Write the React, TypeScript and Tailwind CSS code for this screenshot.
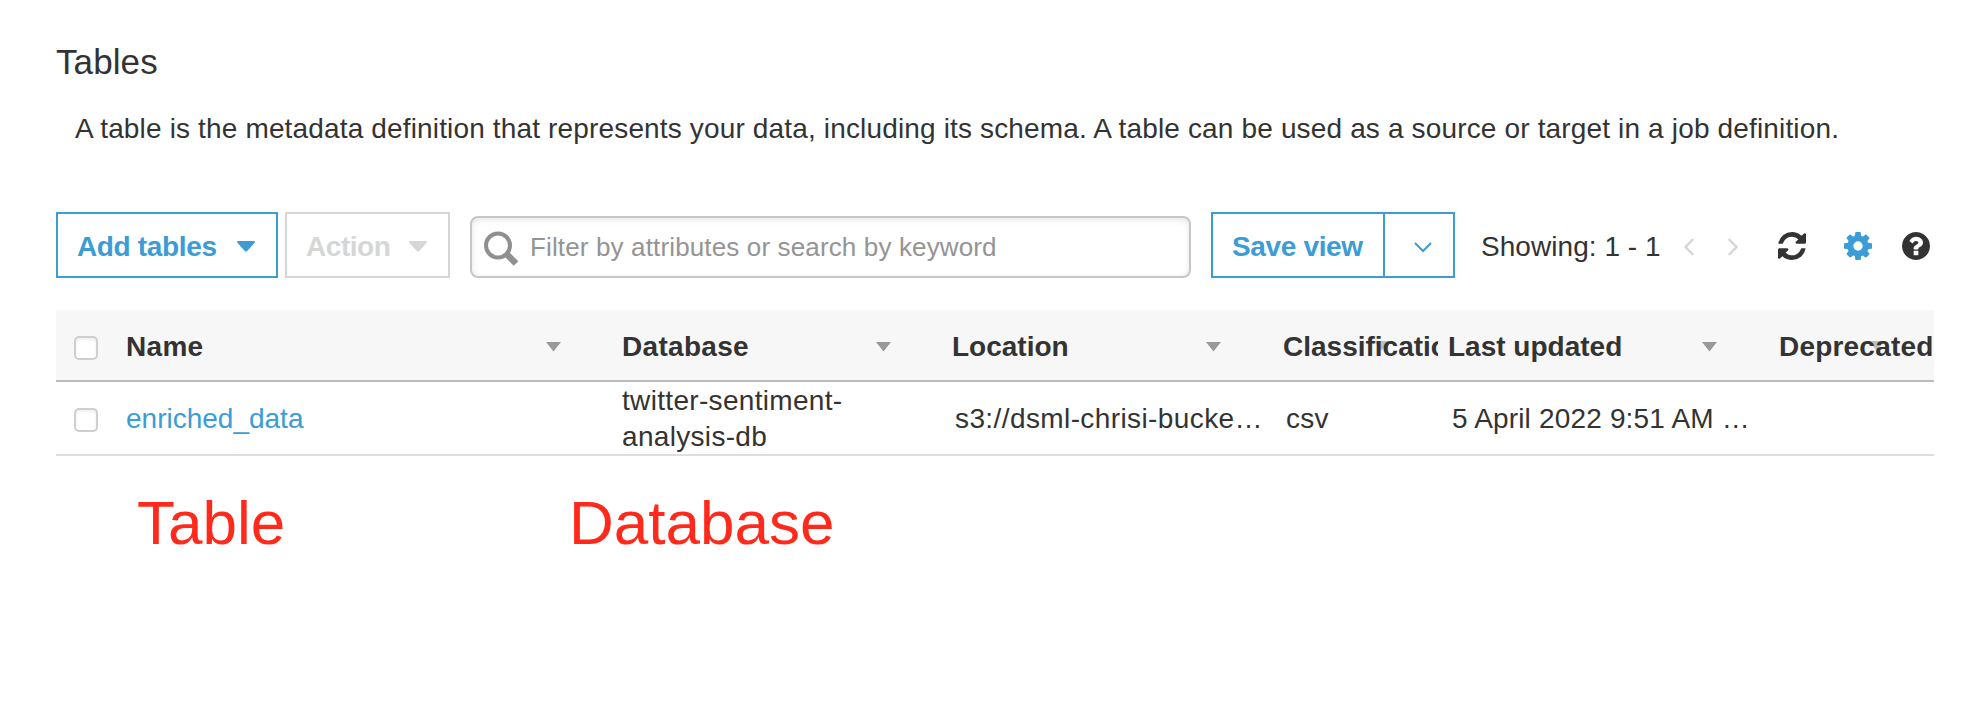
import type { ReactNode } from "react";

function Caret() {
  return (
    <svg viewBox="0 0 18 11" className="mt-[3px] h-[11px] w-[18px]" fill="currentColor">
      <path d="M1 0h16q1.500.4.6 1.700L10.200 10q-1.200 1.200-2.400 0L.4 1.700Q-.5.4 1 0z" />
    </svg>
  );
}

function SortArrow({ className = "" }: { className?: string }) {
  return (
    <svg viewBox="0 0 15 10" className={"h-[10px] w-[15px] text-[#999999] " + className} fill="currentColor">
      <path d="M0 0h15L7.500 9.500z" />
    </svg>
  );
}

function Checkbox() {
  return (
    <span className="block h-6 w-6 rounded-[5px] border-2 border-[#cfcfcf] bg-white shadow-[inset_0_2px_3px_rgba(0,0,0,0.07)]" />
  );
}

function HeaderCell({ children, className }: { children: ReactNode; className: string }) {
  return <div className={"flex items-center pt-[3px] whitespace-nowrap " + className}>{children}</div>;
}

export default function App() {
  return (
    <div className="h-[716px] w-[1986px] overflow-hidden bg-white pl-14 font-['Liberation_Sans',Arial,sans-serif] text-[28px] leading-9 text-[#333333]">
      <h1 className="pt-[41px] text-[35px] leading-[42px] tracking-[0.1px]">Tables</h1>
      <p className="mt-7 pl-[19px] leading-9 tracking-[0.153px] whitespace-nowrap">
        A table is the metadata definition that represents your data, including its schema. A table can be used as a
        source or target in a job definition.
      </p>

      <div className="mt-[65px] flex h-[66px] items-center whitespace-nowrap">
        <button className="flex h-[66px] w-[222px] items-center justify-between border-2 border-[#3b9cd6] pr-[21px] pl-[19px] font-bold tracking-[-0.35px] text-[#3b9cd6]">
          <span className="pt-[3px]">Add tables</span>
          <Caret />
        </button>
        <button className="ml-[7px] flex h-[66px] w-[165px] items-center justify-between border-2 border-[#d5d7d7] pr-[21px] pl-[19px] font-bold tracking-[-0.45px] text-[#d5d7d7]">
          <span className="pt-[3px]">Action</span>
          <Caret />
        </button>
        <div className="ml-5 flex h-[62px] w-[721px] items-center self-end rounded-lg border-2 border-[#c6c6c6] pl-3 text-[26px] tracking-[0.14px] text-[#949494] shadow-[inset_0_2px_6px_rgba(0,0,0,0.1)]">
          <svg viewBox="0 0 36 36" className="mt-[3px] h-9 w-9" fill="none" stroke="#8f8f8f">
            <circle cx="14" cy="14.500" r="12" strokeWidth="4" />
            <path d="M23 23.500l9 9" strokeWidth="6.500" />
          </svg>
          <span className="ml-[10px]">Filter by attributes or search by keyword</span>
        </div>
        <div className="ml-5 flex h-[66px] w-[244px] border-2 border-[#3b9cd6] text-[#3b9cd6]">
          <button className="w-[172px] border-r-2 border-[#3b9cd6] pt-[3px] pl-[19px] text-left font-bold tracking-[-0.35px]">
            Save view
          </button>
          <button className="flex flex-1 items-center justify-center pl-[7px]">
            <svg viewBox="0 0 18 11" className="mt-1 h-[11px] w-[18px]" fill="none" stroke="currentColor" strokeWidth="2">
              <path d="M1 1l8 8 8-8" />
            </svg>
          </button>
        </div>
        <span className="ml-[26px] w-[178px] pt-[3px] tracking-[0.05px]">Showing: 1 - 1</span>
        <svg viewBox="0 0 10 18" className="mt-[3px] ml-[25px] h-[18px] w-[10px]" fill="none" stroke="#d5d7d7" strokeWidth="2.400">
          <path d="M9.200 1L1.500 9l7.700 8" />
        </svg>
        <svg viewBox="0 0 10 18" className="mt-[3px] ml-[34px] h-[18px] w-[10px]" fill="none" stroke="#d5d7d7" strokeWidth="2.400">
          <path d="M.8 1l7.700 8-7.700 8" />
        </svg>
        <svg viewBox="0 0 1536 1536" className="mt-[2px] ml-[40px] h-7 w-7" fill="#333333">
          <path d="M1511 928q0 5-1 7-64 268-268 434.500T764 1536q-146 0-282.500-55T238 1324l-129 129q-19 19-45 19t-45-19-19-45V960q0-26 19-45t45-19h448q26 0 45 19t19 45-19 45l-137 137q71 66 161 102t187 36q134 0 250-65t186-179q11-17 53-117 8-23 30-23h192q13 0 22.500 9.500t9.500 22.500zM1536 128v448q0 26-19 45t-45 19h-448q-26 0-45-19t-19-45 19-45l138-138Q969 256 768 256q-134 0-250 65T332 500q-11 17-53 117-8 23-30 23H50q-13 0-22.500-9.500T18 608v-7q65-268 270-434.500T768 0q146 0 284 55.500T1297 212l130-129q19-19 45-19t45 19 19 45z" />
        </svg>
        <svg viewBox="0 0 1536 1536" className="mt-[2px] ml-[38px] h-7 w-7" fill="#3b9cd6">
          <path d="M1024 768q0-106-75-181t-181-75-181 75-75 181 75 181 181 75 181-75 75-181zm512-109v222q0 12-8 23t-20 13l-185 28q-19 54-39 91 35 50 107 138 10 12 10 25t-9 23q-27 37-99 108t-94 71q-12 0-26-9l-138-108q-44 23-91 38-16 136-29 186-7 28-36 28H657q-14 0-24.500-8.500T621 1506l-28-184q-49-16-90-37l-141 107q-10 9-25 9-14 0-25-11-126-114-165-168-7-10-7-23 0-12 8-23 15-21 51-66.500t54-70.500q-27-50-41-99L29 913q-13-2-21-12.500T0 877V655q0-12 8-23t19-13l186-28q14-46 39-92-40-57-107-138-10-12-10-24 0-10 9-23 26-36 98.500-107.500T337 135q13 0 26 10l138 107q44-23 91-38 16-136 29-186 7-28 36-28h222q14 0 24.500 8.500T915 30l28 184q49 16 90 37l142-107q9-9 24-9 13 0 25 10 129 119 165 170 7 8 7 22 0 12-8 23-15 21-51 66.500t-54 70.500q26 50 41 98l183 28q13 2 21 12.500t8 23.500z" />
        </svg>
        <svg viewBox="0 0 1536 1536" className="mt-[2px] ml-[30px] h-7 w-7" fill="#333333">
          <path d="M896 1248v-192q0-14-9-23t-23-9h-192q-14 0-23 9t-9 23v192q0 14 9 23t23 9h192q14 0 23-9t9-23zm256-672q0-88-55.500-163t-138.500-116-170-41q-243 0-371 213-15 24 8 42l132 100q7 6 19 6 16 0 25-12 53-68 86-92 34-24 86-24 48 0 85.500 26t37.500 59q0 38-20 61t-68 45q-63 28-115.500 86.500t-52.500 125.500v36q0 14 9 23t23 9h192q14 0 23-9t9-23q0-19 21.500-49.500t54.500-49.500q32-18 49-28.500t46-35 44.500-48 28-60.500 12.500-81zm384 192q0 209-103 385.500t-279.500 279.500-385.500 103-385.500-103-279.500-279.500-103-385.500 103-385.500 279.500-279.500 385.500-103 385.500 103 279.500 279.500 103 385.500z" />
        </svg>
      </div>

      <div className="mt-8 w-[1878px] overflow-hidden">
        <div className="flex h-[72px] border-b-2 border-[#bbbbbb] bg-[#f7f7f7] font-bold">
          <div className="w-[70px] pt-[26px] pl-[18px]">
            <Checkbox />
          </div>
          <HeaderCell className="w-[496px]">
            <span className="w-[420px] tracking-[0.3px]">Name</span>
            <SortArrow />
          </HeaderCell>
          <HeaderCell className="w-[330px]">
            <span className="w-[254px] tracking-[0.3px]">Database</span>
            <SortArrow />
          </HeaderCell>
          <HeaderCell className="w-[331px]">
            <span className="w-[254px]">Location</span>
            <SortArrow />
          </HeaderCell>
          <HeaderCell className="relative w-[155px] overflow-hidden">
            <SortArrow className="absolute top-[31px] left-[91px] opacity-60" />
            <span className="relative">Classification</span>
          </HeaderCell>
          <HeaderCell className="ml-[10px] w-[331px]">
            <span className="w-[254px]">Last updated</span>
            <SortArrow />
          </HeaderCell>
          <HeaderCell className="relative flex-1">
            <SortArrow className="absolute top-[31px] left-[90px] opacity-60" />
            <span className="relative tracking-[0.2px]">Deprecated</span>
          </HeaderCell>
        </div>
        <div className="flex h-[74px] items-center border-b-2 border-[#dddddd] whitespace-nowrap">
          <div className="w-[70px] pt-[3px] pl-[18px]">
            <Checkbox />
          </div>
          <div className="w-[496px] pt-0.5 text-[#3b9cd6]">enriched_data</div>
          <div className="w-[333px] pt-0.5 leading-9 tracking-[0.32px]">
            twitter-sentiment-
            <br />
            analysis-db
          </div>
          <div className="w-[331px] pt-0.5 tracking-[0.4px]">s3://dsml-chrisi-bucke…</div>
          <div className="w-[166px] pt-0.5 tracking-[0.3px]">csv</div>
          <div className="pt-0.5 tracking-[0.17px]">5 April 2022 9:51 AM …</div>
        </div>
      </div>

      <div className="mt-[31px] flex text-[62px] leading-[72px] text-[#ff2a1c]">
        <div className="w-[432px] pl-[81px]">Table</div>
        <div className="pl-[81px]">Database</div>
      </div>
    </div>
  );
}
